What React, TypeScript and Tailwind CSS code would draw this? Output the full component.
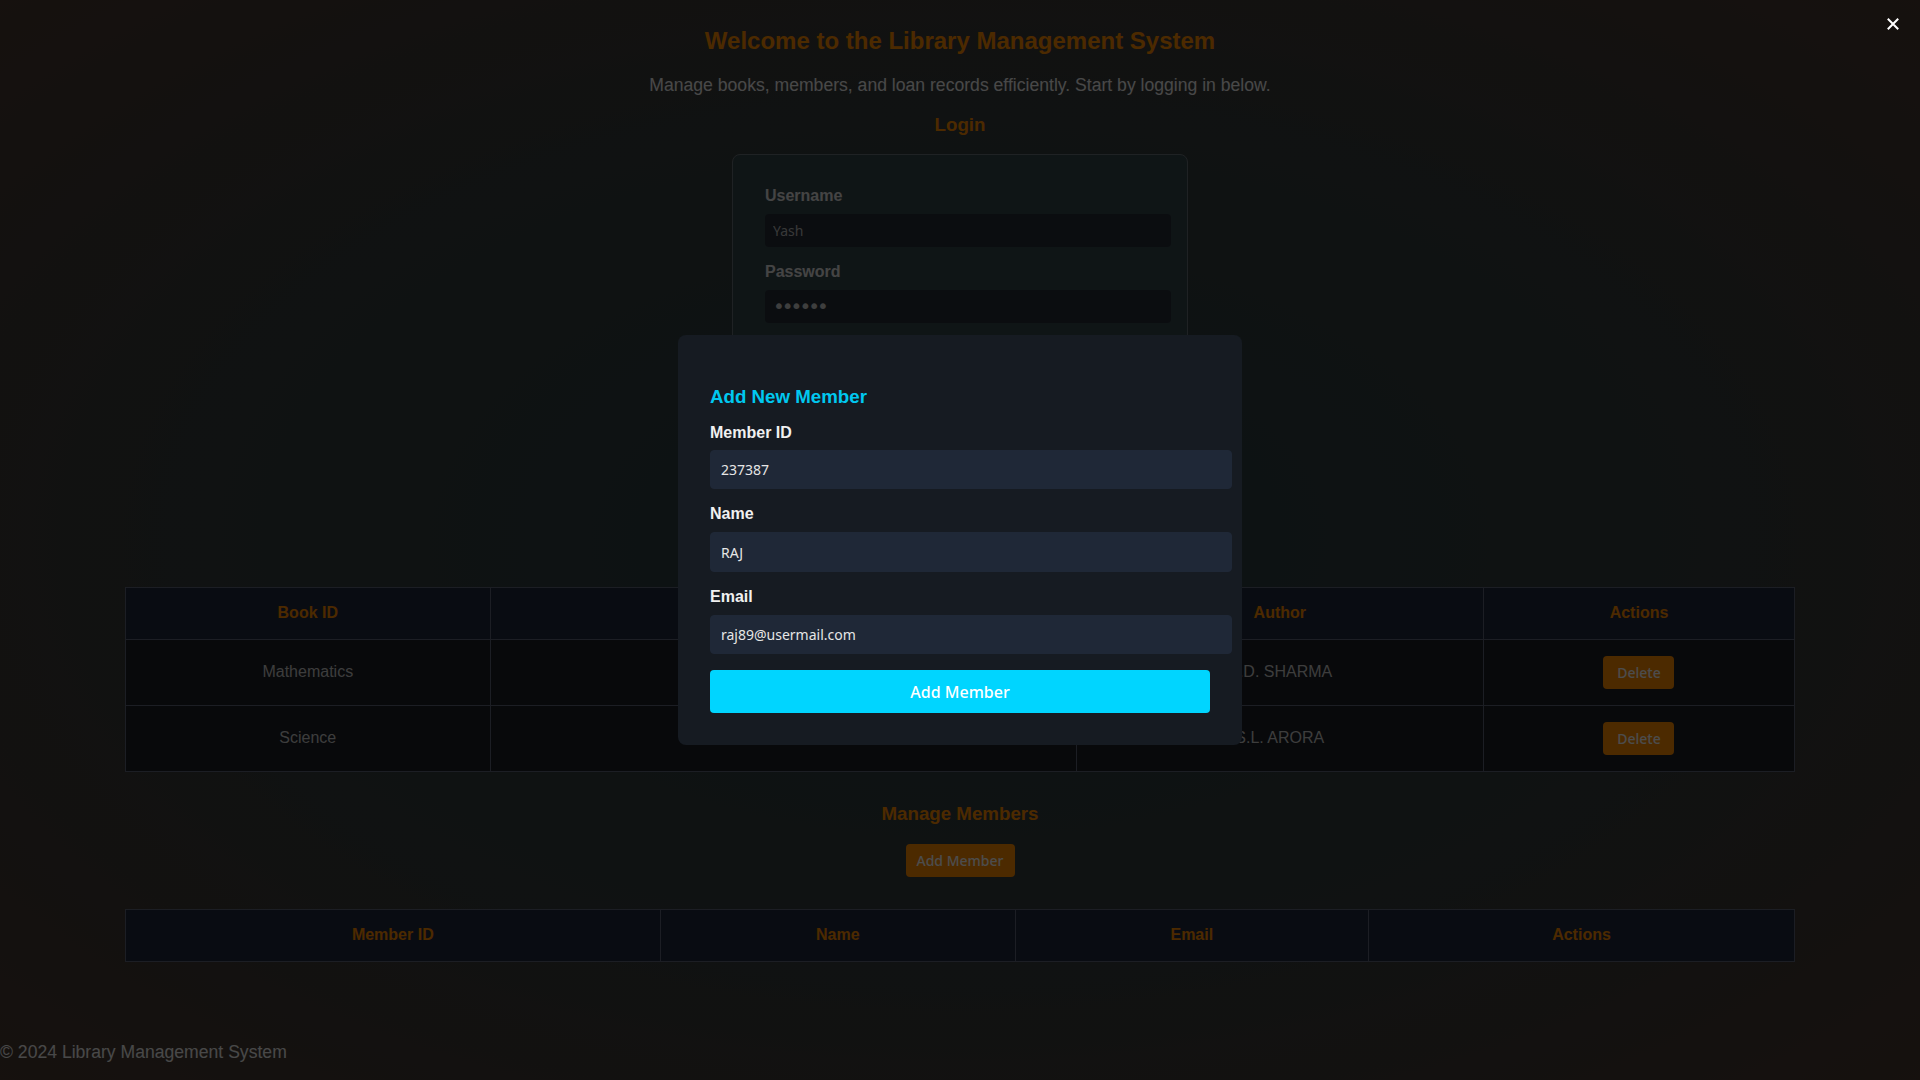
import { useState } from "react";

const books = [
  { id: "Mathematics", title: "Mathematics XII", author: "R.D. SHARMA" },
  { id: "Science", title: "Science X", author: "S.L. ARORA" },
];

function CloseIcon() {
  return (
    <svg width="12" height="12" viewBox="0 0 12 12" fill="none">
      <path d="M1.5 1.5L10.5 10.5M10.5 1.5L1.5 10.5" stroke="#ffffff" strokeWidth="2" strokeLinecap="square" />
    </svg>
  );
}

export default function App() {
  const [memberId, setMemberId] = useState("237387");
  const [name, setName] = useState("RAJ");
  const [email, setEmail] = useState("raj89@usermail.com");

  return (
    <div className="relative min-h-screen flex flex-col bg-[radial-gradient(ellipse_at_center,#283e44_0%,#363c3d_55%,#4a3a30_100%)] font-['Liberation_Sans',Arial,sans-serif]">
      <main className="flex flex-col items-center pt-[26.5px]">
        <h1 className="text-[24px] font-bold text-[#ff8c00] leading-[28px]">
          Welcome to the Library Management System
        </h1>
        <p className="mt-[20px] text-[17.6px] text-[#f2f2f2] leading-[21px]">
          Manage books, members, and loan records efficiently. Start by logging in below.
        </p>
        <h2 className="mt-[18px] text-[18.72px] font-bold text-[#ff8c00] leading-[22px]">Login</h2>

        <div className="mt-[18px] w-[456px] rounded-lg border border-[#6a7378] bg-[#35464c] p-8">
          <label className="block text-[16px] font-bold text-[#e5e5e5] leading-[18px] mb-[9px]">Username</label>
          <input
            readOnly
            value="Yash"
            className="block box-content w-[390px] px-2 h-[33px] rounded bg-[#252d38] text-[14px] text-[#bdbdbd] font-['Noto_Sans',sans-serif] outline-none mb-4"
          />
          <label className="block text-[16px] font-bold text-[#e5e5e5] leading-[18px] mb-[9px]">Password</label>
          <input
            readOnly
            type="password"
            value="secret"
            className="block box-content w-[390px] px-2 h-[33px] rounded bg-[#252d38] text-[20px] tracking-[-3px] text-[#cfcfcf] font-['DejaVu_Sans',sans-serif] outline-none mb-4"
          />
          <button className="w-full h-[38px] rounded bg-[#ff8c00] text-white font-medium font-['Noto_Sans',sans-serif]">
            Login
          </button>
        </div>

        <h2 className="mt-[70px] text-[18.72px] font-bold text-[#ff8c00] leading-[22px]">Manage Books</h2>
        <button className="mt-[20px] h-[33px] px-3 rounded bg-[#ff8c00] text-white text-[14px] font-medium font-['Noto_Sans',sans-serif]">
          Add Book
        </button>

        <table className="mt-[32px] w-[87%] border-collapse border border-[#5e6778] text-[16px]">
          <thead>
            <tr className="h-[52px] bg-[#212b3c]">
              <th className="w-[365px] border border-[#5e6778] font-bold text-[#ff8c00]">Book ID</th>
              <th className="w-[586px] border border-[#5e6778] font-bold text-[#ff8c00]">Title</th>
              <th className="w-[407px] border border-[#5e6778] font-bold text-[#ff8c00]">Author</th>
              <th className="border border-[#5e6778] font-bold text-[#ff8c00]">Actions</th>
            </tr>
          </thead>
          <tbody>
            {books.map((b) => (
              <tr key={b.id} className="h-[66px] bg-[#1b1f26]">
                <td className="border border-[#5e6778] text-center text-[#cccccc]">{b.id}</td>
                <td className="border border-[#5e6778] text-center text-[#cccccc]">{b.title}</td>
                <td className="border border-[#5e6778] text-center text-[#cccccc]">{b.author}</td>
                <td className="border border-[#5e6778] text-center">
                  <button className="w-[71px] h-[33px] rounded bg-[#ff8c00] text-white text-[14px] font-medium font-['Noto_Sans',sans-serif]">
                    Delete
                  </button>
                </td>
              </tr>
            ))}
          </tbody>
        </table>

        <h2 className="mt-[31px] text-[18.72px] font-bold text-[#ff8c00] leading-[22px]">Manage Members</h2>
        <button className="mt-[19px] w-[109px] h-[33px] rounded bg-[#ff8c00] text-white text-[14px] font-medium font-['Noto_Sans',sans-serif]">
          Add Member
        </button>

        <table className="mt-[32px] w-[87%] border-collapse border border-[#5e6778] text-[16px]">
          <thead>
            <tr className="h-[52px] bg-[#212b3c]">
              <th className="w-[535px] border border-[#5e6778] font-bold text-[#ff8c00]">Member ID</th>
              <th className="w-[355px] border border-[#5e6778] font-bold text-[#ff8c00]">Name</th>
              <th className="w-[353px] border border-[#5e6778] font-bold text-[#ff8c00]">Email</th>
              <th className="border border-[#5e6778] font-bold text-[#ff8c00]">Actions</th>
            </tr>
          </thead>
          <tbody />
        </table>
      </main>

      <footer className="mt-auto pb-[17px] text-[17.6px] leading-[21px] text-[#f2f2f2]">
        © 2024 Library Management System
      </footer>

      {/* modal overlay */}
      <div className="fixed inset-0 bg-black/70 flex items-center justify-center">
        <button className="absolute top-[18px] right-[21px] p-0">
          <CloseIcon />
        </button>
        <div className="w-[564px] rounded-lg bg-[#161b22] px-8 pt-[51px] pb-8">
          <h3 className="text-[18.72px] font-bold leading-[22px] text-[#00c8f0]">Add New Member</h3>
          <label className="block mt-[16px] mb-[8px] text-[16px] leading-[18px] font-bold text-[#f0f0f0]">Member ID</label>
          <input
            value={memberId}
            onChange={(e) => setMemberId(e.target.value)}
            className="block box-content w-[500px] h-[37px] px-[10px] rounded border border-[#1f2837] bg-[#1f2837] text-[14px] text-[#e6e6e6] font-['Noto_Sans',sans-serif] outline-none"
          />
          <label className="block mt-4 mb-[9px] text-[16px] leading-[18px] font-bold text-[#f0f0f0]">Name</label>
          <input
            value={name}
            onChange={(e) => setName(e.target.value)}
            className="block box-content w-[500px] h-[38px] px-[10px] rounded border border-[#1f2837] bg-[#1f2837] text-[14px] text-[#e6e6e6] font-['Noto_Sans',sans-serif] outline-none"
          />
          <label className="block mt-4 mb-[9px] text-[16px] leading-[18px] font-bold text-[#f0f0f0]">Email</label>
          <input
            value={email}
            onChange={(e) => setEmail(e.target.value)}
            className="block box-content w-[500px] h-[37px] px-[10px] rounded border border-[#1f2837] bg-[#1f2837] text-[14px] text-[#e6e6e6] font-['Noto_Sans',sans-serif] outline-none"
          />
          <button className="mt-4 w-full h-[43px] rounded bg-[#00d5ff] text-white text-[16px] font-medium font-['Noto_Sans',sans-serif]">
            Add Member
          </button>
        </div>
      </div>
    </div>
  );
}
